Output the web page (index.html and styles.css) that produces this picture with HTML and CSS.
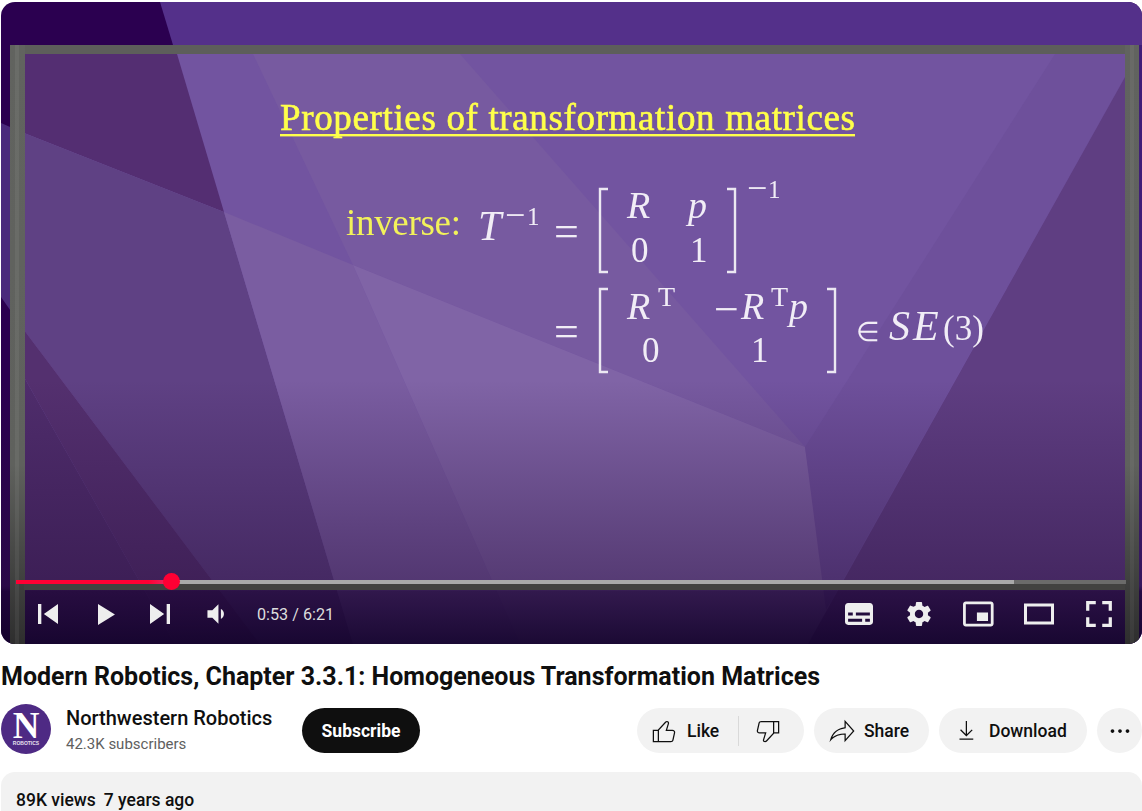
FILE: index.html
```html
<!DOCTYPE html>
<html lang="en">
<head>
    <meta charset="UTF-8">
    <title>Modern Robotics, Chapter 3.3.1: Homogeneous Transformation Matrices</title>
    <link rel="stylesheet" href="styles.css">
</head>
<body>
<div class="page">

    <div class="player">
        <svg class="slide" viewBox="1 2 1141 642" xmlns="http://www.w3.org/2000/svg">
            <defs>
                <linearGradient id="fade" gradientUnits="userSpaceOnUse" x1="0" y1="380" x2="0" y2="644">
                    <stop offset="0" stop-color="#2a1040" stop-opacity="0"/>
                    <stop offset="0.78" stop-color="#2a1040" stop-opacity="0.5"/>
                    <stop offset="0.8" stop-color="#1c0434" stop-opacity="0.78"/>
                    <stop offset="1" stop-color="#12022a" stop-opacity="0.92"/>
                </linearGradient>
                <linearGradient id="rail" gradientUnits="userSpaceOnUse" x1="0" y1="45" x2="0" y2="644">
                    <stop offset="0" stop-color="#61635f"/>
                    <stop offset="0.7" stop-color="#5f615d"/>
                    <stop offset="1" stop-color="#2e2e2e"/>
                </linearGradient>
            </defs>

            <!-- outside the board -->
            <rect x="1" y="2" width="1141" height="642" fill="#2b0050"/>
            <polygon points="160,2 1142,2 1142,45 173,45" fill="#54308a"/>
            <rect x="1133" y="45" width="9" height="599" fill="#3f1d78"/>
            <polygon points="1,123 24,133 24,330 1,297" fill="#4a2a7c"/>

            <!-- board -->
            <rect x="24" y="54" width="1101" height="590" fill="#7254a0"/>
            <polygon points="24,54 177,54 224,212 24,133" fill="#542e72"/>
            <polygon points="24,133 224,212 353,644 260,644 24,330" fill="#5f4184"/>
            <polygon points="24,330 260,644 175,644 24,377" fill="#54306f"/>
            <polygon points="24,377 175,644 24,644" fill="#4f2d6c"/>
            <polygon points="224,212 353,265 520,644 353,644" fill="#7a5da1"/>
            <polygon points="253,54 460,54 805,447 353,265" fill="#775aa0"/>
            <polygon points="353,265 805,447 836,644 520,644" fill="#8064a6"/>
            <polygon points="1055,54 1125,54 1125,77 826,610 805,447" fill="#6e509b"/>
            <polygon points="1125,77 808,644 1125,644" fill="#5f3e82"/>
            <rect x="1" y="380" width="1141" height="264" fill="url(#fade)"/>

            <!-- frame -->
            <rect x="10" y="45" width="1129" height="9" fill="#5d5e5b"/>
            <rect x="10" y="45" width="15" height="599" fill="url(#rail)"/>
            <rect x="15" y="45" width="4" height="599" fill="#fff" opacity="0.06"/>
            <rect x="1125" y="45" width="14" height="599" fill="url(#rail)"/>
            <rect x="1130" y="45" width="4" height="599" fill="#fff" opacity="0.05"/>
            <rect x="24" y="580" width="1101" height="10" fill="#424240"/>

            <!-- slide text -->
            <g class="math">
                <text class="heading" x="280" y="130" textLength="575" lengthAdjust="spacing">Properties of transformation matrices</text>
                <rect class="rule" x="280" y="134" width="575" height="2.4"/>

                <text class="label" x="346" y="235" textLength="115" lengthAdjust="spacing">inverse:</text>
                <text class="ital big" x="478" y="240">T</text>
                <text class="minus" x="505" y="227">−</text>
                <text class="sup" x="527" y="225">1</text>
                <text class="eq" x="554" y="246">=</text>
                <path class="bracket" d="M608 189H600V272H608"/>
                <path class="bracket" d="M727 189H735V272H727"/>
                <text class="minus" x="747" y="200">−</text>
                <text class="sup" x="768" y="198">1</text>
                <text class="ital" x="627" y="218">R</text>
                <text class="ital" x="688" y="218">p</text>
                <text class="num" x="631" y="262">0</text>
                <text class="num" x="690" y="262">1</text>

                <text class="eq" x="554" y="346">=</text>
                <path class="bracket" d="M608 289H600V372H608"/>
                <path class="bracket" d="M827 289H835V372H827"/>
                <text class="ital" x="627" y="319">R</text>
                <text class="sup-t" x="658" y="306">T</text>
                <text class="eq" x="714" y="324">−</text>
                <text class="ital" x="741" y="319">R</text>
                <text class="sup-t" x="771" y="306">T</text>
                <text class="ital" x="789" y="319">p</text>
                <text class="num" x="642" y="362">0</text>
                <text class="num" x="751" y="362">1</text>
                <text class="elem" x="856" y="341">∈</text>
                <text class="ital big" x="889" y="340">S<tspan x="913">E</tspan></text>
                <text class="num" x="943" y="340">(3)</text>
            </g>
        </svg>

        <div class="chrome">
            <div class="progress">
                <div class="buffered" style="width: 998px"></div>
                <div class="played" style="width: 156px"></div>
                <div class="scrubber" style="left: 147px"></div>
            </div>
            <div class="controls">
                <div class="controls-left">
                    <div class="ctl"><svg width="60" height="60" viewBox="0 0 36 36"><path d="m12 12h2v12h-2z m3.5 6 8.5 6V12z"/></svg></div>
                    <div class="ctl"><svg width="47" height="47" viewBox="-1 0 36 36"><path d="M12 26 25 18 12 10z"/></svg></div>
                    <div class="ctl"><svg width="60" height="60" viewBox="0 0 36 36"><path d="M12 24 20.5 18 12 12V24z M22 12v12h2V12h-2z"/></svg></div>
                    <div class="ctl"><svg width="44" height="44" viewBox="-3 0 36 36"><path d="M8 21H12L17 26V10L12 15H8V21Z M19 14V22C20.48 21.32 21.5 19.77 21.5 18C21.5 16.26 20.48 14.74 19 14Z"/></svg></div>
                    <span class="time">0:53 / 6:21</span>
                </div>
                <div class="controls-right">
                    <div class="ctl wide"><svg width="56" height="56" viewBox="0 0 36 36"><path d="M11 11C9.9 11 9 11.9 9 13V23C9 24.1 9.9 25 11 25H25C26.1 25 27 24.1 27 23V13C27 11.9 26.1 11 25 11H11Z M11 17H14V19H11V17Z M20 23H11V21H20V23Z M25 23H22V21H25V23Z M25 19H16V17H25V19Z"/></svg></div>
                    <div class="ctl wide"><svg width="54" height="54" viewBox="0 0 36 36"><path d="m23.94 18.78c.03-.25.05-.51.05-.78 0-.27-.02-.52-.05-.78l1.68-1.32c.15-.12.19-.33.09-.51l-1.6-2.76c-.09-.17-.31-.24-.48-.17l-1.99.8c-.41-.32-.86-.58-1.35-.78L20 10.34C19.97 10.15 19.8 10 19.6 10h-3.2c-.2 0-.37.15-.39.34L15.71 12.46c-.49.2-.94.47-1.35.78l-1.99-.8c-.18-.07-.39 0-.48.17l-1.6 2.76c-.1.17-.06.39.09.51l1.68 1.32c-.03.25-.05.52-.05.78 0 .26.02.52.05.78l-1.68 1.32c-.15.12-.19.33-.09.51l1.6 2.76c.09.17.31.24.48.17l1.99-.8c.41.32.86.58 1.35.78l.3 2.12c.02.19.19.34.39.34h3.2c.2 0 .37-.15.39-.34l.3-2.12c.49-.2.94-.47 1.35-.78l1.99.8c.18.07.39 0 .48-.17l1.6-2.76c.09-.17.05-.39-.09-.51l-1.68-1.32z m-5.94 2.01c-1.54 0-2.8-1.25-2.8-2.8 0-1.54 1.25-2.8 2.8-2.8 1.54 0 2.8 1.25 2.8 2.8 0 1.54-1.25 2.8-2.8 2.8z"/></svg></div>
                    <div class="ctl wide"><svg width="50" height="50" viewBox="0.5 0 36 36"><path d="M25 17H17V23H25V17Z M29 25V10.98C29 9.88 28.1 9 27 9H9C7.9 9 7 9.88 7 10.98V25C7 26.1 7.9 27 9 27H27C28.1 27 29 26.1 29 25Z M27 25.02H9V10.97H27V25.02Z"/></svg></div>
                    <div class="ctl wide"><svg width="54" height="54" viewBox="0 0 36 36"><path fill-rule="evenodd" d="m28 11v14H8V11z m-18 2h16v10H10V13z"/></svg></div>
                    <div class="ctl wide"><svg width="58" height="58" viewBox="0 0 36 36"><path d="m10 16h2v-4h4v-2H10z m10-6v2h4v4h2V10z m4 14h-4v2H26v-6h-2z M12 20H10V26h6v-2h-4z"/></svg></div>
                </div>
            </div>
        </div>
    </div>

    <h1 class="title">Modern Robotics, Chapter 3.3.1: Homogeneous Transformation Matrices</h1>

    <div class="meta">
        <div class="owner">
            <svg class="avatar" viewBox="0 0 50 50">
                <circle cx="25" cy="25" r="25" fill="#4e2a84"/>
                <text class="avatar-n" x="25" y="34" text-anchor="middle">N</text>
                <text class="avatar-sub" x="25" y="41" text-anchor="middle">ROBOTICS</text>
            </svg>
            <div class="owner-text">
                <div class="channel">Northwestern Robotics</div>
                <div class="subs">42.3K subscribers</div>
            </div>
            <button class="subscribe">Subscribe</button>
        </div>
        <div class="actions">
            <div class="pill like-group">
                <div class="like">
                    <svg class="icon" viewBox="0 0 24 24"><path d="M18.77 11h-4.23l1.52-4.94C16.38 5.03 15.54 4 14.38 4c-.58 0-1.14.24-1.52.65L7 11H3v10h4 1 9.43c1.06 0 1.98-.67 2.19-1.61l1.34-6C21.23 12.15 20.18 11 18.77 11z M7 20H4v-8h3V20z M19.98 13.17l-1.34 6C18.54 19.65 18.03 20 17.43 20H8v-8.61l5.6-6.06C13.79 5.12 14.08 5 14.38 5c.26 0 .5.11.63.3.07.1.15.26.09.47l-1.52 4.94L13.18 12h1.35 4.23c.41 0 .8.17 1.03.46C19.92 12.61 20.05 12.86 19.98 13.17z"/></svg>
                    <span>Like</span>
                </div>
                <div class="dislike">
                    <svg class="icon" viewBox="0 0 24 24"><path d="M17 4h-1H6.57C5.5 4 4.59 4.67 4.38 5.61l-1.34 6C2.77 12.85 3.82 14 5.23 14h4.23l-1.52 4.94C7.62 19.97 8.46 21 9.62 21c.58 0 1.14-.24 1.52-.65L17 14h4V4H17z M10.4 19.67C10.21 19.88 9.92 20 9.62 20c-.26 0-.5-.11-.63-.3-.07-.1-.15-.26-.09-.47l1.52-4.94.4-1.29H9.46 5.23c-.41 0-.8-.17-1.03-.46-.12-.15-.25-.4-.18-.72l1.34-6C5.46 5.35 5.97 5 6.57 5H16v8.61L10.4 19.67z M20 13h-3V5h3V13z"/></svg>
                </div>
            </div>
            <div class="pill share">
                <svg class="icon" viewBox="0 0 24 24"><path d="M15 5.63 20.66 12 15 18.37V14h-1c-3.96 0-7.14 1-9.75 3.09 1.84-4.07 5.11-6.4 9.89-7.1l.86-.13V5.63M14 3v6C6.22 10.13 3.11 15.33 2 21c2.78-3.97 6.44-6 12-6v6l8-9-8-9z"/></svg>
                <span>Share</span>
            </div>
            <div class="pill download">
                <svg class="icon" viewBox="0 0 24 24"><path d="M17 18v1H6v-1h11zm-.5-6.6-.7-.7-3.8 3.7V4h-1v10.4l-3.8-3.8-.7.7 5 5 5-4.9z"/></svg>
                <span>Download</span>
            </div>
            <div class="pill more">
                <svg class="icon" viewBox="0 0 24 24"><path d="M7.5 12c0 .83-.67 1.5-1.5 1.5s-1.5-.67-1.5-1.5.67-1.5 1.5-1.5 1.5.67 1.5 1.5zm4.5-1.5c-.83 0-1.5.67-1.5 1.5s.67 1.5 1.5 1.5 1.5-.67 1.5-1.5-.67-1.5-1.5-1.5zm6 0c-.83 0-1.5.67-1.5 1.5s.67 1.5 1.5 1.5 1.5-.67 1.5-1.5-.67-1.5-1.5-1.5z"/></svg>
            </div>
        </div>
    </div>

    <div class="description">
        <span>89K views</span>
        <span>7 years ago</span>
    </div>

</div>
</body>
</html>
```

FILE: styles.css
```css
html, body {
    margin: 0;
    padding: 0;
    height: 100%;
    overflow: hidden;
    background-color: #fff;
}
body {
    font-family: 'Roboto', sans-serif;
    color: #0f0f0f;
}
.page {
    padding: 2px 0 0 1px;
}

/* player */
.player {
    position: relative;
    height: 642px;
    border-radius: 14px;
    overflow: hidden;
}
.slide {
    display: block;
    width: 100%;
    height: 100%;
}
.math {
    filter: blur(0.35px);
}
.math text {
    font-family: 'Liberation Serif', serif;
    fill: #f1edf6;
}
.math .heading {
    font-size: 37px;
    fill: #ffff4a;
    stroke: #ffff4a;
    stroke-width: 0.6px;
}
.math .rule {
    fill: #ffff4a;
}
.math .label {
    font-size: 37px;
    fill: #f2f25a;
}
.math .ital {
    font-size: 38px;
    font-style: italic;
}
.math .big {
    font-size: 42px;
}
.math .num {
    font-size: 35px;
}
.math .eq {
    font-size: 44px;
}
.math .elem {
    font-size: 27px;
}
.math .sup {
    font-size: 25px;
}
.math .sup-t {
    font-size: 28px;
}
.math .minus {
    font-size: 36px;
}
.bracket {
    fill: none;
    stroke: #ece8f2;
    stroke-width: 2.4;
}

/* controls over the video */
.chrome {
    position: absolute;
    left: 0;
    right: 0;
    bottom: 0;
}
.progress {
    position: relative;
    height: 4px;
    margin: 0 16px 4px 15px;
    background-color: rgba(255, 255, 255, 0.22);
}
.buffered, .played {
    position: absolute;
    top: 0;
    bottom: 0;
    left: 0;
}
.buffered {
    background-color: #a9a9a9;
}
.played {
    background: linear-gradient(to right, #f03 85%, #e2306e);
}
.scrubber {
    position: absolute;
    top: -7px;
    width: 17px;
    height: 17px;
    border-radius: 50%;
    background-color: #f03;
}
.controls {
    display: flex;
    justify-content: space-between;
    align-items: center;
    height: 52px;
    padding: 0 13px 4px 19px;
}
.controls-left, .controls-right {
    display: flex;
    align-items: center;
    height: 52px;
}
.ctl {
    display: flex;
    align-items: center;
    justify-content: center;
    width: 56px;
    height: 52px;
}
.ctl.wide {
    width: 60px;
}
.ctl svg {
    flex-shrink: 0;
    fill: #eee;
}
.time {
    margin-left: 13px;
    font-size: 16.2px;
    color: #ddd;
}

/* below the video */
.title {
    margin: 15px 0 10px;
    font-size: 25px;
    line-height: 35px;
    font-weight: 700;
}
.meta {
    display: flex;
    justify-content: space-between;
    align-items: flex-start;
    height: 50px;
}
.owner {
    display: flex;
    align-items: flex-start;
}
.avatar {
    width: 50px;
    height: 50px;
    overflow: visible;
}
.avatar-n {
    font-family: 'Liberation Serif', serif;
    font-weight: 700;
    font-size: 37px;
    fill: #fff;
}
.avatar-sub {
    font-family: 'Liberation Sans', sans-serif;
    font-size: 5px;
    font-weight: 700;
    fill: #e6e0ee;
}
.owner-text {
    margin-left: 15px;
    width: 236px;
}
.channel {
    font-size: 20px;
    line-height: 28px;
    font-weight: 500;
}
.subs {
    font-size: 15px;
    line-height: 24px;
    color: #606060;
}
.subscribe {
    width: 118px;
    height: 45px;
    margin-top: 4px;
    border: none;
    border-radius: 23px;
    background-color: #0f0f0f;
    color: #fff;
    font-family: 'Roboto', sans-serif;
    font-size: 17.5px;
    font-weight: 700;
}
.actions {
    display: flex;
    gap: 10px;
    margin-top: 4px;
}
.pill {
    display: flex;
    align-items: center;
    height: 45px;
    border-radius: 23px;
    background-color: #f2f2f2;
    font-size: 17.5px;
    font-weight: 500;
}
.icon {
    width: 30px;
    height: 30px;
    fill: #0f0f0f;
}
.like-group {
    width: 167px;
}
.like {
    display: flex;
    align-items: center;
    gap: 8px;
    width: 102px;
    height: 30px;
    padding-left: 12px;
    box-sizing: border-box;
    border-right: 1px solid #d9d9d9;
}
.dislike {
    display: flex;
    margin-left: 14px;
}
.share {
    width: 115px;
    gap: 7px;
    padding-left: 13px;
    box-sizing: border-box;
}
.download {
    width: 148px;
    gap: 7px;
    padding-left: 13px;
    box-sizing: border-box;
}
.more {
    width: 45px;
    justify-content: center;
}
.description {
    display: flex;
    gap: 8px;
    margin-top: 18px;
    height: 60px;
    padding: 16px 15px 0;
    border-radius: 14px;
    background-color: #f2f2f2;
    font-size: 17.5px;
    line-height: 24px;
    font-weight: 500;
}
```
